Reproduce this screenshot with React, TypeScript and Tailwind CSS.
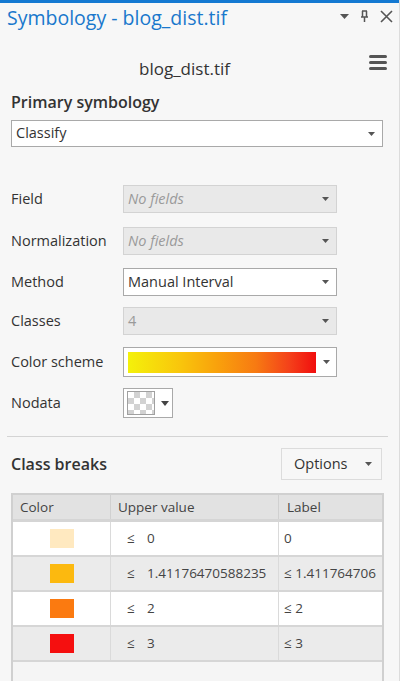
import React from "react";

const font = { fontFamily: '"Segoe UI", "Open Sans", "Noto Sans", sans-serif' };

function Caret({ className = "" }: { className?: string }) {
  return (
    <svg width="7" height="4" viewBox="0 0 7 4" className={className}>
      <path d="M0 0h7L3.5 4z" fill="#555" />
    </svg>
  );
}

function Select({
  value,
  disabled,
  italic,
  className = "",
}: {
  value: string;
  disabled?: boolean;
  italic?: boolean;
  className?: string;
}) {
  return (
    <div
      className={`flex items-center justify-between border px-[4px] ${
        disabled
          ? "bg-[#e9e9e9] border-[#d3d3d3] text-[#9a9a9a]"
          : "bg-white border-[#a9a9a9] text-[#333]"
      } ${className}`}
    >
      <span className={`text-[14.5px] leading-none ${italic ? "italic" : ""}`}>{value}</span>
      <Caret className="mr-[3px]" />
    </div>
  );
}

function Row({ label, children, className = "" }: { label: string; children: React.ReactNode; className?: string }) {
  return (
    <div className={`flex items-center ${className}`}>
      <div className="w-[112px] text-[14.5px] text-[#333]">{label}</div>
      {children}
    </div>
  );
}

const breaks = [
  { color: "#ffe9c0", upper: "0", label: "0" },
  { color: "#fcb90f", upper: "1.41176470588235", label: "≤ 1.411764706" },
  { color: "#fb7a10", upper: "2", label: "≤ 2" },
  { color: "#f50f0f", upper: "3", label: "≤ 3" },
];

export default function App() {
  return (
    <div
      className="w-[400px] h-[681px] bg-[#f7f7f7] overflow-hidden flex flex-col border-r border-[#dcdcdc]"
      style={font}
    >
      <div className="h-[3px] bg-[#1479d2]" />
      {/* pane title bar */}
      <div className="h-[31px] flex items-center justify-between pl-[7px] pr-[6px]">
        <span className="text-[19.5px] text-[#1a78cc] leading-none -mt-[1px]">Symbology - blog_dist.tif</span>
        <div className="flex items-center gap-[11px] -mt-[4px]">
          <svg width="9" height="6" viewBox="0 0 9 6">
            <path d="M0 0h9L4.5 5z" fill="#555" />
          </svg>
          <svg width="9" height="13" viewBox="0 0 9 13">
            <path d="M2 1h5M2.5 1v6M6.5 1v6M1 7h7M4.5 7v5" stroke="#555" strokeWidth="1.5" fill="none" />
          </svg>
          <svg width="13" height="13" viewBox="0 0 13 13">
            <path d="M1 1l11 11M12 1L1 12" stroke="#555" strokeWidth="1.6" />
          </svg>
        </div>
      </div>

      {/* layer name */}
      <div className="relative h-[40px] mt-[19px] flex items-center justify-center pr-[30px]">
        <span className="text-[17px] text-[#333] -mt-[8px]">blog_dist.tif</span>
        <div className="absolute right-[12px] top-[2px] flex flex-col gap-[3px]">
          <div className="w-[18px] h-[3px] rounded-full bg-[#555]" />
          <div className="w-[18px] h-[3px] rounded-full bg-[#555]" />
          <div className="w-[18px] h-[3px] rounded-full bg-[#555]" />
        </div>
      </div>

      <div className="px-[11px] mt-[4px]">
        <div className="text-[16px] font-semibold text-[#333] leading-none -mt-[3px]">Primary symbology</div>
        <Select value="Classify" className="mt-[10px] h-[27px] w-[372px] pl-[4px]" />

        <Row label="Field" className="mt-[38px]">
          <Select value="No fields" disabled italic className="h-[28px] w-[214px]" />
        </Row>
        <Row label="Normalization" className="mt-[14px]">
          <Select value="No fields" disabled italic className="h-[28px] w-[214px]" />
        </Row>
        <Row label="Method" className="mt-[13px]">
          <Select value="Manual Interval" className="h-[28px] w-[214px]" />
        </Row>
        <Row label="Classes" className="mt-[11px]">
          <Select value="4" disabled className="h-[28px] w-[214px]" />
        </Row>
        <Row label="Color scheme" className="mt-[12px]">
          <div className="h-[30px] w-[214px] bg-white border border-[#a9a9a9] flex items-center justify-between pl-[4px]">
            <div className="h-[21px] w-[188px] bg-[linear-gradient(to_right,#f4f10a,#f9c50c_28%,#f9a00c_48%,#f77a12_68%,#f4401a_86%,#f10e0e)]" />
            <Caret className="mr-[6px]" />
          </div>
        </Row>
        <Row label="Nodata" className="mt-[11px]">
          <div className="h-[30px] w-[50px] bg-white border border-[#a9a9a9] flex items-center pl-[3px] gap-[6px]">
            <div className="h-[24px] w-[28px] border border-[#a0a0a0] bg-[image:repeating-conic-gradient(#d2d2d2_0_25%,#ffffff_0_50%)] bg-size-[12px_12px]" />
            <svg width="8" height="5" viewBox="0 0 8 5">
              <path d="M0 0h8L4 5z" fill="#444" />
            </svg>
          </div>
        </Row>
      </div>

      <div className="mx-[7px] mt-[18px] h-px w-[381px] bg-[#d4d4d4]" />

      <div className="pl-[11px] pr-[17px] mt-[11px] flex items-center justify-between">
        <span className="text-[16px] font-semibold text-[#333]">Class breaks</span>
        <div className="h-[32px] w-[101px] border border-[#dcdcdc] bg-[#f7f7f7] flex items-center justify-between pl-[12px] pr-[9px]">
          <span className="text-[14.5px] text-[#333]">Options</span>
          <Caret />
        </div>
      </div>

      {/* class breaks grid */}
      <div className="mx-[11px] mt-[13px] w-[373px] flex-1 border-x-2 border-t-2 border-[#d0d0d0] bg-[#f5f5f5] text-[13.5px] text-[#444]">
        <div className="flex h-[27px] bg-[#e2e2e2] border-b-[3px] border-[#d5d5d5] items-center">
          <div className="w-[98px] pl-[7px] border-r border-[#d0d0d0] h-full flex items-center">Color</div>
          <div className="w-[168px] pl-[7px] border-r border-[#d0d0d0] h-full flex items-center">Upper value</div>
          <div className="flex-1 pl-[8px] h-full flex items-center">Label</div>
        </div>
        {breaks.map((b, i) => (
          <div
            key={i}
            className={`flex h-[35px] border-b-2 border-[#d6d6d6] ${i % 2 === 0 ? "bg-white" : "bg-[#ebebeb]"}`}
          >
            <div className="w-[98px] border-r border-[#dadada] flex items-center justify-center">
              <div className="w-[24px] h-[19px]" style={{ backgroundColor: b.color }} />
            </div>
            <div className="w-[168px] border-r border-[#dadada] flex items-center pl-[16px]">
              <span className="w-[20px]">≤</span>
              <span>{b.upper}</span>
            </div>
            <div className="flex-1 flex items-center pl-[5px]">{b.label}</div>
          </div>
        ))}
      </div>
    </div>
  );
}
